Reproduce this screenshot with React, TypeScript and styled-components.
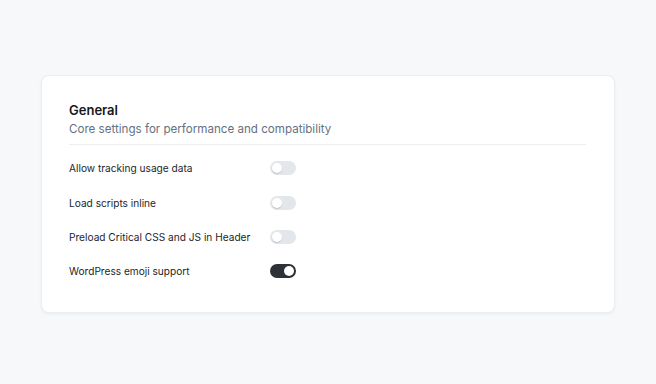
import React, { useState } from "react";
import styled, { createGlobalStyle } from "styled-components";

const Global = createGlobalStyle`
  html, body { margin: 0; padding: 0; background: #f7f8fa; }
  body { font-family: Inter, "Noto Sans", sans-serif; -webkit-font-smoothing: antialiased; }
`;

const Page = styled.div`
  width: 656px;
  height: 384px;
  box-sizing: border-box;
  padding: 75px 41px 0 41px;
`;

const Card = styled.section`
  box-sizing: border-box;
  width: 574px;
  height: 238px;
  background: #ffffff;
  border: 1px solid #eceef1;
  border-radius: 8px;
  box-shadow: 0 1px 3px rgba(16, 24, 40, 0.06);
  padding: 25px 28px 0 27px;
`;

const Header = styled.header`
  padding-bottom: 6px;
  border-bottom: 1px solid #eceef0;
  margin-bottom: 6px;
`;

const Title = styled.h2`
  margin: 0;
  font-size: 13px;
  line-height: 19px;
  font-weight: 600;
  color: #16181d;
`;

const Subtitle = styled.p`
  margin: 0;
  font-size: 11.6px;
  line-height: 18px;
  color: #667080;
`;

const Row = styled.div`
  display: grid;
  grid-template-columns: 201px 26px;
  align-items: center;
  height: 34.4px;
`;

const Label = styled.span`
  font-size: 10.15px;
  color: #23262b;
`;

const Track = styled.button<{ $on: boolean }>`
  position: relative;
  width: 26px;
  height: 14px;
  padding: 0;
  border: none;
  border-radius: 7px;
  background: ${(p) => (p.$on ? "#2c3238" : "#e3e6ea")};
  cursor: pointer;
`;

const Knob = styled.span<{ $on: boolean }>`
  position: absolute;
  top: 2px;
  left: ${(p) => (p.$on ? "14px" : "2px")};
  width: 10px;
  height: 10px;
  border-radius: 50%;
  background: #ffffff;
  box-shadow: 0 1px 1px rgba(0, 0, 0, 0.15);
`;

const initial = [
  { label: "Allow tracking usage data", on: false },
  { label: "Load scripts inline", on: false },
  { label: "Preload Critical CSS and JS in Header", on: false },
  { label: "WordPress emoji support", on: true },
];

export default function App() {
  const [items, setItems] = useState(initial);
  return (
    <Page>
      <Global />
      <Card>
        <Header>
          <Title>General</Title>
          <Subtitle>Core settings for performance and compatibility</Subtitle>
        </Header>
        {items.map((it, i) => (
          <Row key={it.label}>
            <Label>{it.label}</Label>
            <Track
              $on={it.on}
              aria-pressed={it.on}
              onClick={() =>
                setItems((s) => s.map((x, j) => (j === i ? { ...x, on: !x.on } : x)))
              }
            >
              <Knob $on={it.on} />
            </Track>
          </Row>
        ))}
      </Card>
    </Page>
  );
}
